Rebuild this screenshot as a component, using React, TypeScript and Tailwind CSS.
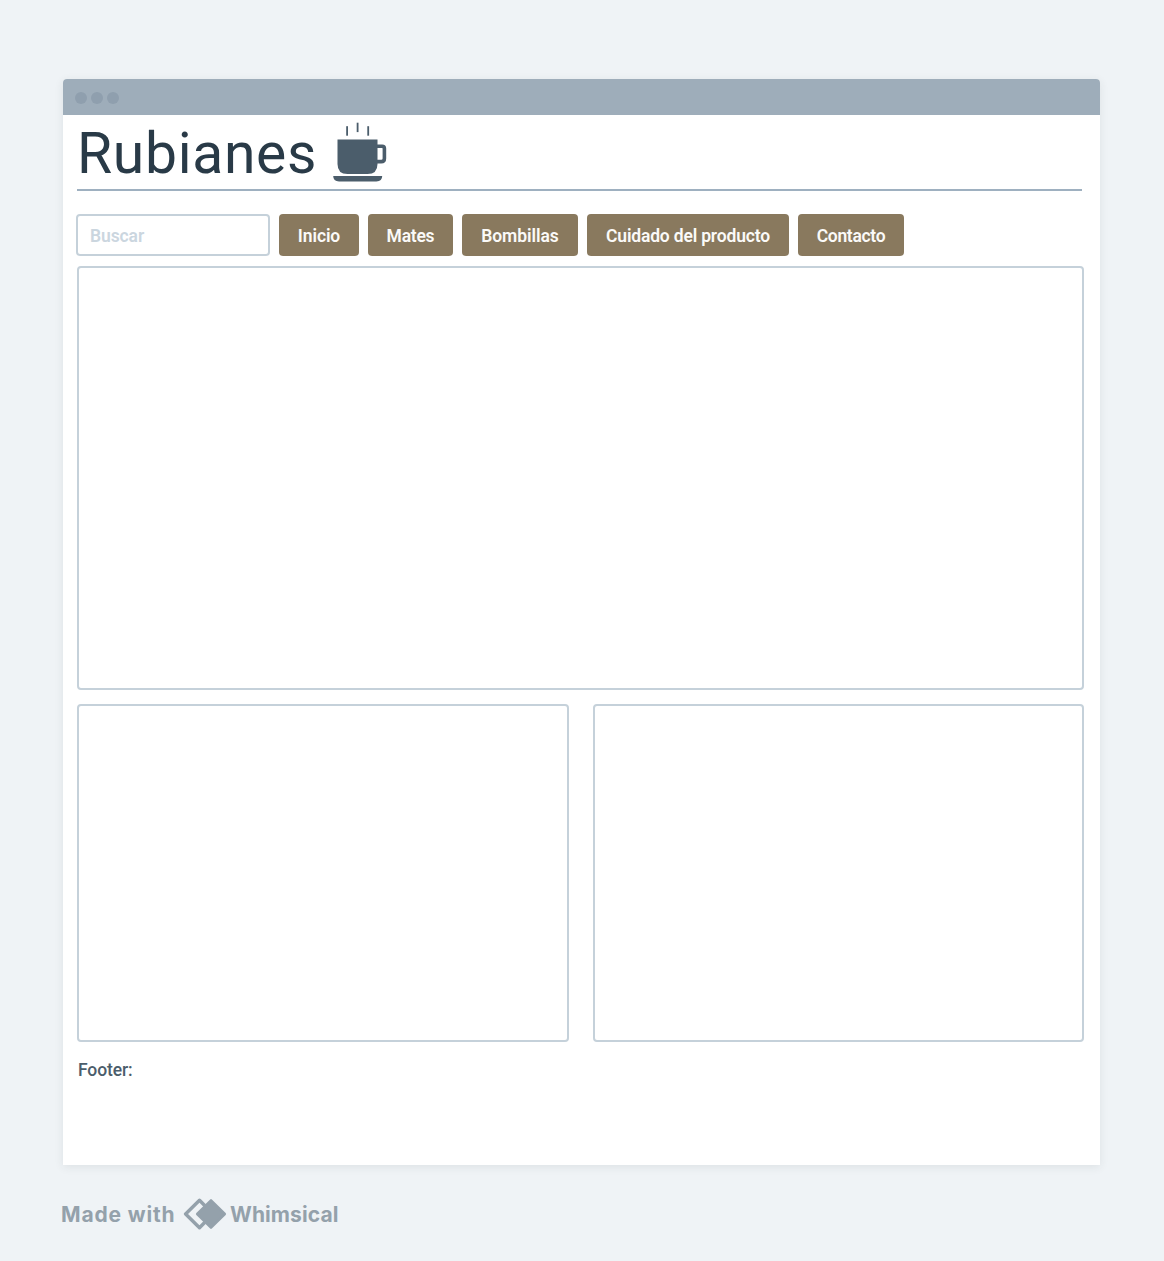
const navItems = [
  { label: "Inicio", box: "w-20", text: "tracking-[-0.1px]" },
  { label: "Mates", box: "w-[85px]", text: "tracking-[-0.25px]" },
  { label: "Bombillas", box: "w-[116px]", text: "tracking-[-0.05px]" },
  { label: "Cuidado del producto", box: "w-[202px]", text: "tracking-[-0.18px]" },
  { label: "Contacto", box: "w-[106px]", text: "tracking-[-0.3px]" },
];

function CoffeeCup() {
  return (
    <svg width="56" height="62" viewBox="0 0 56 62" className="ml-4 mt-[6px] shrink-0" aria-hidden="true">
      <g fill="#4b5d6b">
        <path d="M5.500 18.500h40v24.500q0 10-10 10H15.500q-10 0-10-10Z" />
        <path d="M1.200 55h49q0 5.400-5.800 5.400H7q-5.800 0-5.800-5.400Z" />
        <rect x="14.200" y="5.200" width="1.800" height="9.500" />
        <rect x="24.700" y="1.700" width="1.800" height="9.400" />
        <rect x="35.300" y="5.200" width="1.800" height="9.500" />
      </g>
      <path d="M45 25.200h5.200q2.200 0 2.200 2.200v10q0 3.200-3.200 3.200H45" fill="none" stroke="#4b5d6b" strokeWidth="3.600" />
    </svg>
  );
}

function WhimsicalMark() {
  return (
    <svg width="44" height="32" viewBox="0 0 44 32" className="ml-2 shrink-0" aria-hidden="true">
      <path d="M16.500 2.300 2.600 16l13.900 13.700L30 16Z" fill="none" stroke="#94a1ab" strokeWidth="3.400" strokeLinejoin="round" />
      <path d="M28 2.300 14.200 16 28 29.700 41.800 16Z" fill="#94a1ab" stroke="#94a1ab" strokeWidth="2.500" strokeLinejoin="round" />
    </svg>
  );
}

export default function App() {
  return (
    <div className="h-[1261px] w-[1164px] overflow-hidden bg-[#eff3f6] pl-[63px] pt-[79px] font-['Roboto',sans-serif]">
      <main className="flex h-[1086px] w-[1037px] flex-col overflow-hidden rounded-t-[4px] bg-white shadow-[0_2px_10px_rgba(40,50,60,0.09)]">
        <div className="flex h-9 shrink-0 items-center gap-1 bg-[#9eadba] pl-3 pt-px">
          <span className="size-3 rounded-full bg-[#8f9fae]" />
          <span className="size-3 rounded-full bg-[#8f9fae]" />
          <span className="size-3 rounded-full bg-[#8f9fae]" />
        </div>
        <header className="ml-[14px] flex h-[76px] w-[1005px] shrink-0 border-b-2 border-[#9eb0c0]">
          <h1 className="mt-[5px] w-[239px] whitespace-nowrap text-[57px] leading-[67px] tracking-[0.7px] text-[#293a47]">Rubianes</h1>
          <CoffeeCup />
        </header>
        <nav className="ml-[13px] mt-[23px] flex h-[42px] shrink-0 gap-[9px] text-[17.500px] font-semibold">
          <input
            aria-label="Buscar"
            placeholder="Buscar"
            className="w-[194px] rounded-[4px] border-2 border-[#c5d1da] pl-3 pt-0.5 tracking-[-0.1px] outline-none placeholder:text-[#cbd6df] placeholder:opacity-100"
          />
          {navItems.map((item) => (
            <button key={item.label} className={`${item.box} rounded-[4px] bg-[#89795e] pt-0.5 text-center whitespace-nowrap text-[#fbfaf8]`}>
              <span className={item.text}>{item.label}</span>
            </button>
          ))}
        </nav>
        <section className="ml-[14px] mt-[10px] h-[424px] w-[1007px] shrink-0 rounded-[4px] border-2 border-[#c5d1da]" />
        <div className="ml-[14px] mt-[14px] grid h-[338px] w-[1007px] shrink-0 grid-cols-2 gap-6">
          <section className="rounded-[4px] border-2 border-[#c5d1da]" />
          <section className="rounded-[4px] border-2 border-[#c5d1da]" />
        </div>
        <footer className="ml-[15px] mt-4 text-[17.500px] font-medium leading-6 tracking-[-0.1px] text-[#4b5d6b]">Footer:</footer>
      </main>
      <div className="-ml-0.5 mt-[33px] flex h-8 items-center font-['Inter',sans-serif] text-[21px] font-bold text-[#94a1ab]">
        <span className="w-[114px] whitespace-nowrap pt-0.5 tracking-[0.85px]">Made with</span>
        <WhimsicalMark />
        <span className="ml-[3px] whitespace-nowrap pt-0.5 tracking-[0.1px]">Whimsical</span>
      </div>
    </div>
  );
}
